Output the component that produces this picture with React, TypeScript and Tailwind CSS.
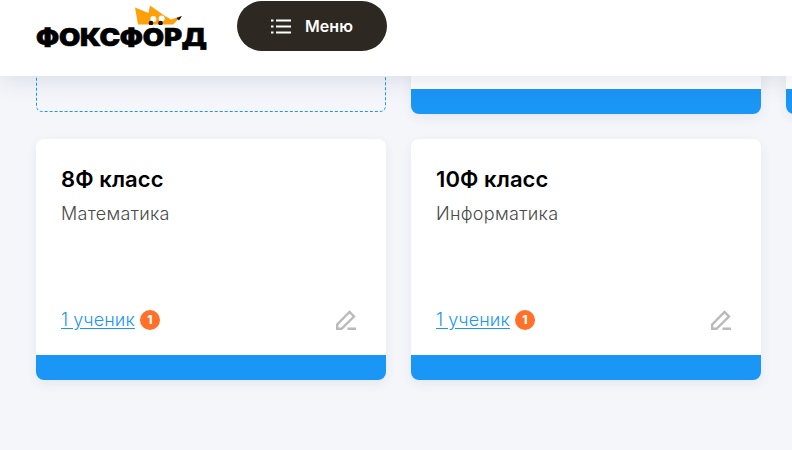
const cards = [
  { id: 'a', kind: 'dashed' },
  { id: 'b', kind: 'plain' },
  { id: 'c', kind: 'plain' },
  { id: 'd', kind: 'course', title: '8Ф класс', subject: 'Математика' },
  { id: 'e', kind: 'course', title: '10Ф класс', subject: 'Информатика' },
];

function Logo() {
  return (
    <div className="relative h-[48px] w-[171px] shrink-0">
      <svg className="absolute left-[99px] top-[4px]" width="48" height="20" viewBox="0 0 48 20" aria-hidden="true">
        <path d="M0 2.500 L13.500 8 L15 0.500 L30 11 L36 14.500 L46.500 11 L38 19.500 L3 19.500 Z" fill="#ff9f0a" />
        <circle cx="18.300" cy="14" r="3" fill="#fff" />
        <circle cx="26.700" cy="13.500" r="3" fill="#fff" />
        <circle cx="16" cy="18" r="2.300" fill="#111" />
        <circle cx="25.500" cy="18" r="2.300" fill="#111" />
        <path d="M41.500 13 L47 11 L44 15.500 Z" fill="#111" />
      </svg>
      <span className="absolute left-0 top-[20px] origin-left scale-x-[1.147] font-['Inter',sans-serif] text-[24px] leading-[34px] font-black tracking-[-0.2px] whitespace-nowrap text-black [-webkit-text-stroke:0.6px_#000]">
        ФОКСФОРД
      </span>
    </div>
  );
}

function MenuButton() {
  return (
    <button className="flex h-[50px] w-[150px] items-center justify-center gap-[14px] rounded-full bg-[#2d2821] text-white">
      <svg width="20" height="15" viewBox="0 0 20 15" fill="none" aria-hidden="true">
        <path d="M0 1.500h2.500M0 7.500h2.500M0 13.500h2.500M5 1.500h15M5 7.500h15M5 13.500h15" stroke="currentColor" strokeWidth="2" />
      </svg>
      <span className="font-['Inter',sans-serif] text-[16px] font-semibold">Меню</span>
    </button>
  );
}

function EditIcon() {
  return (
    <svg width="20" height="20" viewBox="0 0 20 20" fill="none" aria-hidden="true" className="mr-[5px] text-[#bababa]">
      <path d="M1.200 18.800 V14.500 L13.500 2 L18 6.500 L5.500 18.800 Z" stroke="currentColor" strokeWidth="2.400" />
      <path d="M11.500 18.800 H20" stroke="currentColor" strokeWidth="2.400" />
    </svg>
  );
}

function Card({ card }: { card: (typeof cards)[number] }) {
  if (card.kind === 'dashed') {
    return <div className="mb-[2px] rounded-[6px] border border-dashed border-[#1a96f6]" />;
  }

  return (
    <div className="flex h-[241px] flex-col overflow-hidden rounded-[8px] bg-white shadow-[0_4px_12px_rgba(40,50,90,0.07)]">
      <div className="flex flex-1 flex-col px-[25px] pt-[25px] pb-[23px]">
        {card.title && (
          <>
            <h3 className="text-[22px] leading-[30px] font-semibold tracking-[0.1px] text-black">{card.title}</h3>
            <p className="mt-[8px] text-[18px] leading-[24px] font-light tracking-[0.3px] text-[#4a4a4a]">{card.subject}</p>
            <div className="mt-auto flex items-center justify-between">
              <div className="flex items-center gap-[5px]">
                <a href="#" className="text-[18px] leading-[24px] font-light tracking-[0.1px] text-[#1a96f6] underline underline-offset-2">
                  1 ученик
                </a>
                <span className="flex size-[20px] items-center justify-center rounded-full bg-[#ff7028] text-[12px] font-extrabold text-white">
                  1
                </span>
              </div>
              <EditIcon />
            </div>
          </>
        )}
      </div>
      <div className="h-[25px] bg-[#1a96f6]" />
    </div>
  );
}

export default function App() {
  return (
    <div className="flex h-[450px] w-[792px] flex-col overflow-hidden bg-[#f4f6fa] font-['Inter',sans-serif]">
      <header className="relative z-10 flex h-[76px] shrink-0 items-start gap-[30px] bg-white pt-px pl-[36px] shadow-[0_4px_24px_rgba(40,50,90,0.12)]">
        <Logo />
        <MenuButton />
      </header>
      <main className="mt-[-203px] grid w-[1150px] grid-cols-[350px_350px_350px] gap-[25px] pl-[36px]">
        {cards.map((card) => (
          <Card key={card.id} card={card} />
        ))}
      </main>
    </div>
  );
}
